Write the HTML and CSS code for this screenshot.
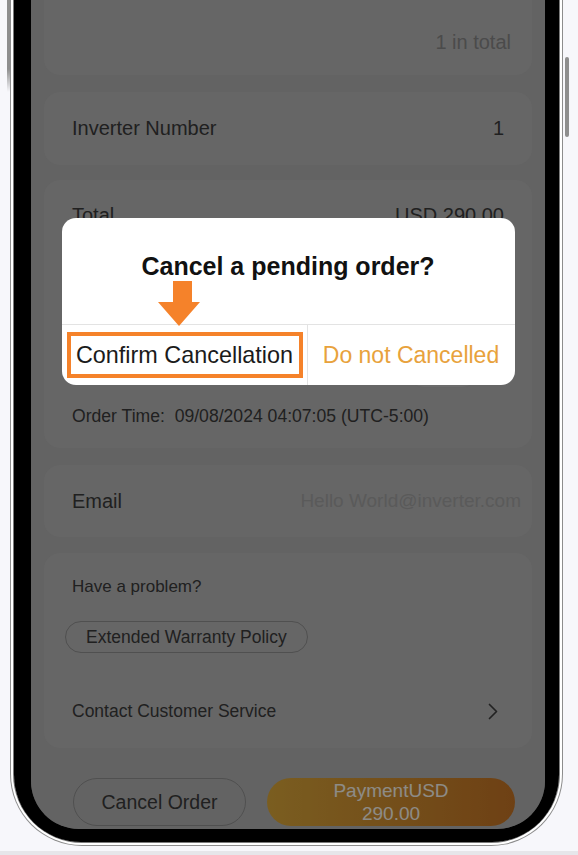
FILE: index.html
```html
<!DOCTYPE html>
<html lang="en">
<head>
<meta charset="utf-8">
<title>Cancel order</title>
<link rel="stylesheet" href="styles.css">
</head>
<body>
<div class="stage">
  <div class="phone">
    <span class="side-btn side-left"></span>
    <span class="side-btn side-right"></span>
    <div class="rim">
      <div class="bezel">
        <div class="screen">
          <div class="card card-count">1 in total</div>

          <div class="card card-inv">
            <span>Inverter Number</span>
            <span>1</span>
          </div>

          <div class="card card-order">
            <div class="row row-total">
              <span>Total</span>
              <span>USD 290.00</span>
            </div>
            <div class="order-details"></div>
            <div class="row row-copy">
              <span></span>
              <span class="copy"></span>
            </div>
            <div class="order-time">Order Time:&nbsp; 09/08/2024 04:07:05 (UTC-5:00)</div>
          </div>

          <div class="card card-email">
            <span>Email</span>
            <span class="email-value">Hello World@inverter.com</span>
          </div>

          <div class="card card-help">
            <div class="help-title">Have a problem?</div>
            <span class="policy">Extended Warranty Policy</span>
            <div class="contact">
              <span>Contact Customer Service</span>
              <svg class="chevron" width="10" height="17" viewBox="0 0 10 17" aria-hidden="true">
                <path d="M1.5 1.5 L8.5 8.5 L1.5 15.5" fill="none" stroke="#3a3a3a" stroke-width="1.7" stroke-linecap="round" stroke-linejoin="round"/>
              </svg>
            </div>
          </div>

          <div class="actions">
            <button class="btn-cancel" type="button">Cancel Order</button>
            <button class="btn-pay" type="button">PaymentUSD<br>290.00</button>
          </div>

          <div class="mask">
            <div class="dialog">
              <div class="dialog-title">Cancel a pending order?</div>
              <div class="dialog-actions">
                <div class="act-confirm">
                  <div class="focus-box">Confirm Cancellation</div>
                </div>
                <div class="act-keep">Do not Cancelled</div>
              </div>
              <svg class="hint-arrow" width="42" height="45" viewBox="0 0 42 45" aria-hidden="true">
                <polygon points="15,0 34,0 34,21 42,21 21,45 0,21 15,21" fill="#f5822a"/>
              </svg>
            </div>
          </div>
        </div>
      </div>
    </div>
  </div>
</div>
<div class="strip"></div>
</body>
</html>
```

FILE: styles.css
```css
* { box-sizing: border-box; }

html, body {
  margin: 0;
  padding: 0;
}

body {
  width: 578px;
  height: 855px;
  overflow: hidden;
  background: #f7f7fb;
  font-family: "Liberation Sans", Arial, sans-serif;
}

.stage {
  height: 848px;
}

.phone {
  position: relative;
  margin-left: 10px;
  width: 553px;
  background: #ffffff;
  border: 1.5px solid #8d8d8d;
  border-top: 0;
  padding: 0 2px 2px;
  border-radius: 0 0 72px 72px;
}

.side-btn {
  position: absolute;
  display: block;
}

.side-left {
  left: -4.5px;
  top: 0;
  width: 3px;
  height: 92px;
  background: linear-gradient(to bottom, #8e8e8e 75%, rgba(142, 142, 142, 0));
}

.side-right {
  right: -6.5px;
  top: 57px;
  width: 4px;
  height: 80px;
  border-radius: 2px;
  background: #8e8e8e;
}

.rim {
  border: 1.5px solid #7b7b7b;
  border-top: 0;
  border-radius: 0 0 69px 69px;
}

.bezel {
  background: #000;
  padding: 0 14px 13px 17px;
  border-radius: 0 0 67px 67px;
}

.screen {
  position: relative;
  height: 829px;
  overflow: hidden;
  background: #a5a5a5;
  border-radius: 0 0 48px 48px;
  padding: 0 13px;
  display: flex;
  flex-direction: column;
  color: #363636;
}

.card {
  background: #aaaaaa;
  border-radius: 16px;
  flex: none;
}

.card-count {
  margin-top: -35px;
  padding: 65px 21px 21px;
  text-align: right;
  font-size: 20px;
  line-height: 24px;
  color: #7d7d7d;
}

.card-inv {
  margin-top: 17px;
  height: 73px;
  padding: 0 28px;
  display: flex;
  justify-content: space-between;
  align-items: center;
  font-size: 20px;
}

.card-order {
  margin-top: 15px;
  padding: 23px 28px 21px;
  display: flex;
  flex-direction: column;
}

.row {
  display: flex;
  justify-content: space-between;
  align-items: center;
}

.row-total {
  font-size: 20px;
  line-height: 24px;
}

.order-details {
  height: 122px;
}

.row-copy {
  margin-top: 3px;
  height: 40px;
}

.copy {
  margin-right: 26px;
  width: 70px;
  height: 32px;
  border-radius: 16px;
  background: #b2b2b2;
  border: 1px solid #a8a8a8;
}

.order-time {
  margin-top: 13px;
  font-size: 17.6px;
  line-height: 22px;
  white-space: pre;
}

.card-email {
  margin-top: 17px;
  height: 72px;
  padding: 0 11px 0 28px;
  display: flex;
  justify-content: space-between;
  align-items: center;
  font-size: 20px;
}

.email-value {
  font-size: 19px;
  color: #969696;
}

.card-help {
  margin-top: 16px;
  padding: 23px 28px 26px;
  display: flex;
  flex-direction: column;
  align-items: flex-start;
}

.help-title {
  font-size: 17px;
  line-height: 22px;
}

.policy {
  margin: 23px 0 0 -7px;
  height: 32px;
  padding: 0 20px;
  border: 1.5px solid #858585;
  border-radius: 16px;
  display: inline-flex;
  align-items: center;
  font-size: 17.5px;
}

.contact {
  margin-top: 47px;
  align-self: stretch;
  display: flex;
  justify-content: space-between;
  align-items: center;
  font-size: 17.5px;
  line-height: 22px;
}

.chevron {
  margin-right: 6px;
}

.actions {
  margin-top: 30px;
  padding-left: 29px;
  display: flex;
  gap: 21px;
  flex: none;
}

.btn-cancel,
.btn-pay {
  height: 48px;
  border-radius: 24px;
  font-family: inherit;
  padding: 0;
}

.btn-cancel {
  width: 173px;
  background: transparent;
  border: 1.5px solid #858585;
  color: #363636;
  font-size: 19.5px;
}

.btn-pay {
  width: 248px;
  border: 0;
  background: linear-gradient(to right, #cc9c36, #b86c22);
  color: #ece8e0;
  font-size: 19px;
  line-height: 23px;
}

.mask {
  position: absolute;
  inset: 0;
  background: rgba(0, 0, 0, 0.4);
  display: flex;
  flex-direction: column;
  align-items: center;
  padding-top: 218px;
}

.dialog {
  position: relative;
  width: 453px;
  background: #ffffff;
  border-radius: 14px;
  overflow: hidden;
}

.dialog-title {
  padding: 33px 0 43px;
  text-align: center;
  font-size: 25px;
  line-height: 30px;
  font-weight: bold;
  color: #111111;
}

.dialog-actions {
  display: grid;
  grid-template-columns: 246px 1fr;
  height: 61px;
  border-top: 1px solid #e3e3e3;
}

.act-confirm {
  border-right: 1px solid #e3e3e3;
  padding: 7px 4px 7px 5px;
}

.focus-box {
  height: 100%;
  border: 4px solid #f5822a;
  display: flex;
  align-items: center;
  justify-content: center;
  font-size: 23.4px;
  color: #1b1b1b;
  white-space: nowrap;
}

.act-keep {
  display: flex;
  align-items: center;
  justify-content: center;
  font-size: 23px;
  color: #e8a23c;
  white-space: nowrap;
}

.hint-arrow {
  position: absolute;
  left: 96px;
  top: 63px;
}

.strip {
  margin-top: 3px;
  height: 4px;
  background: #e6e6ea;
}
```
